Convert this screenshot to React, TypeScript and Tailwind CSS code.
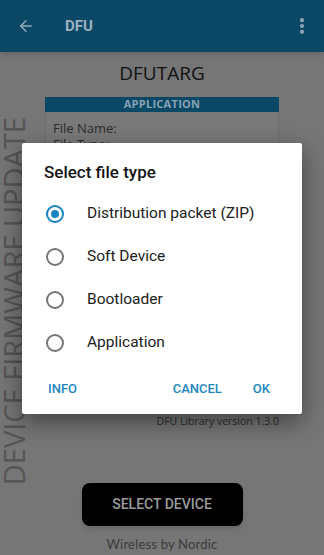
import { ArrowLeft, EllipsisVertical } from 'lucide-react';

const fileTypes = ['Distribution packet (ZIP)', 'Soft Device', 'Bootloader', 'Application'];

function Radio({ checked }: { checked: boolean }) {
  if (checked) {
    return (
      <span className="flex h-[18px] w-[18px] items-center justify-center rounded-full border-2 border-[#1a84c3]">
        <span className="h-[8px] w-[8px] rounded-full bg-[#1a84c3]" />
      </span>
    );
  }
  return <span className="h-[18px] w-[18px] rounded-full border-2 border-[#757575]" />;
}

export default function App() {
  return (
    <div className="relative flex h-[555px] w-[324px] flex-col overflow-hidden bg-[#767676] font-['Roboto',sans-serif]">
      {/* toolbar */}
      <div className="flex h-[52px] shrink-0 items-center bg-[#0a4866] pl-[17px] pr-[12px] shadow-md">
        <ArrowLeft size={18} strokeWidth={2} className="text-[#93a9b8]" />
        <span className="ml-[30px] text-[15px] font-bold text-[#9db2c1]">DFU</span>
        <EllipsisVertical size={20} strokeWidth={3} className="ml-auto text-[#93a9b8]" />
      </div>

      {/* page body */}
      <div className="grid flex-1 grid-cols-[28px_1fr_28px]">
        <div className="flex flex-col items-center justify-end pb-[70px]">
          <span className="rotate-180 whitespace-nowrap font-['Open_Sans',sans-serif] text-[29px] leading-[24px] text-[#555] [writing-mode:vertical-rl]">
            DEVICE FIRMWARE UPDATE
          </span>
        </div>

        <div className="flex flex-col items-center">
          <div className="pt-[8px] font-['Open_Sans',sans-serif] text-[19px] leading-[26px] text-[#111]">DFUTARG</div>

          <div className="mt-[11px] flex w-[234px] flex-col">
            <div className="flex h-[15px] items-center justify-center bg-[#0a4866] font-['Open_Sans',sans-serif] text-[11px] font-bold tracking-wide text-[#89a3b5]">
              APPLICATION
            </div>
            <div className="flex h-[290px] flex-col border border-t-0 border-[#6c6c6c] bg-[#797979] px-[7px] pt-[8px] font-['Open_Sans',sans-serif] text-[13px] leading-[16px] text-[#2c2c2c]">
              <span>File Name:</span>
              <span>File Type:</span>
            </div>
          </div>

          <div className="mt-[12px] w-[234px] text-right font-['Open_Sans',sans-serif] text-[10.5px] text-[#2e2e2e]">
            DFU Library version 1.3.0
          </div>

          <button className="mt-[53px] flex h-[43px] w-[161px] items-center justify-center rounded-lg bg-black text-[14px] font-medium text-[#9b9b9b] shadow-md">
            SELECT DEVICE
          </button>

          <div className="mt-[9px] font-['Lato',sans-serif] text-[13px] tracking-[0.2px] text-[#3b3b3b]">Wireless by Nordic</div>
        </div>
        <div />
      </div>

      {/* dialog */}
      <div className="absolute left-[22px] top-[143px] flex h-[271px] w-[280px] flex-col rounded-[2px] bg-white shadow-[0_8px_24px_rgba(0,0,0,0.45)]">
        <div className="pl-[22px] pt-[17px] text-[17px] font-medium leading-[24px] text-[#141414]">Select file type</div>
        <div className="mt-[8px] flex flex-col">
          {fileTypes.map((t, i) => (
            <div key={t} className="flex h-[43px] items-center pl-[24px]">
              <Radio checked={i === 0} />
              <span className="ml-[23px] text-[15.5px] text-[#212121]">{t}</span>
            </div>
          ))}
        </div>
        <div className="mt-[7px] flex h-[36px] items-center text-[13px] font-medium text-[#1b86bf]">
          <span className="ml-[26px]">INFO</span>
          <span className="ml-auto">CANCEL</span>
          <span className="ml-[31px] mr-[32px]">OK</span>
        </div>
      </div>
    </div>
  );
}
